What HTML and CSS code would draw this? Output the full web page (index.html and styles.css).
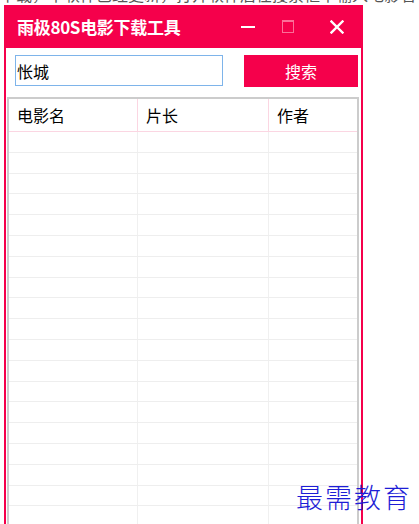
FILE: index.html
```html
<!DOCTYPE html>
<html lang="zh-CN">
<head>
    <meta charset="UTF-8">
    <meta name="viewport" content="width=device-width, initial-scale=1.0">
    <title>雨极80S电影下载工具</title>
    <link rel="stylesheet" href="styles.css">
</head>
<body>

    <!-- the line of the article above, cut off by the screenshot -->
    <div class="cut-line"><span>下载，本软件已经更新，打开软件后在搜索框中输入电影名</span></div>

    <div class="window">
        <div class="title-bar">
            <span class="title">雨极80S电影下载工具</span>
            <div class="controls">
                <span class="ctrl min"></span>
                <span class="ctrl max"></span>
                <svg class="ctrl close" width="14" height="14" viewBox="0 0 14 14">
                    <path d="M1.5 1.5 L12.5 12.5 M12.5 1.5 L1.5 12.5" stroke="#fff" stroke-width="2.4" stroke-linecap="square"/>
                </svg>
            </div>
        </div>

        <div class="search-row">
            <input type="text" class="search-box" value="怅城">
            <button class="search-btn">搜索</button>
        </div>

        <div class="grid">
            <div class="row head">
                <div class="cell">电影名</div>
                <div class="cell">片长</div>
                <div class="cell">作者</div>
            </div>
            <div class="row"><div class="cell"></div><div class="cell"></div><div class="cell"></div></div>
            <div class="row"><div class="cell"></div><div class="cell"></div><div class="cell"></div></div>
            <div class="row"><div class="cell"></div><div class="cell"></div><div class="cell"></div></div>
            <div class="row"><div class="cell"></div><div class="cell"></div><div class="cell"></div></div>
            <div class="row"><div class="cell"></div><div class="cell"></div><div class="cell"></div></div>
            <div class="row"><div class="cell"></div><div class="cell"></div><div class="cell"></div></div>
            <div class="row"><div class="cell"></div><div class="cell"></div><div class="cell"></div></div>
            <div class="row"><div class="cell"></div><div class="cell"></div><div class="cell"></div></div>
            <div class="row"><div class="cell"></div><div class="cell"></div><div class="cell"></div></div>
            <div class="row"><div class="cell"></div><div class="cell"></div><div class="cell"></div></div>
            <div class="row"><div class="cell"></div><div class="cell"></div><div class="cell"></div></div>
            <div class="row"><div class="cell"></div><div class="cell"></div><div class="cell"></div></div>
            <div class="row"><div class="cell"></div><div class="cell"></div><div class="cell"></div></div>
            <div class="row"><div class="cell"></div><div class="cell"></div><div class="cell"></div></div>
            <div class="row"><div class="cell"></div><div class="cell"></div><div class="cell"></div></div>
            <div class="row"><div class="cell"></div><div class="cell"></div><div class="cell"></div></div>
            <div class="row"><div class="cell"></div><div class="cell"></div><div class="cell"></div></div>
            <div class="row"><div class="cell"></div><div class="cell"></div><div class="cell"></div></div>
            <div class="row"><div class="cell"></div><div class="cell"></div><div class="cell"></div></div>
        </div>
    </div>

    <div class="watermark">最需教育</div>

</body>
</html>
```

FILE: styles.css
```css
body {
    margin: 0;
    width: 419px;
    height: 524px;
    overflow: hidden;
    background-color: #fff;
    font-family: "Noto Sans CJK SC", "Noto Sans", sans-serif;
    position: relative;
}

.cut-line {
    height: 5px;
    overflow: hidden;
    font-size: 16px;
    color: #555;
    white-space: nowrap;
}

.cut-line span {
    display: block;
    margin-top: -16px;
    line-height: 20px;
}

.window {
    width: 355px;
    margin-left: 4px;
    border-left: 2px solid #f5004b;
    border-right: 2px solid #f5004b;
    background-color: #fff;
    height: 540px;
}

.title-bar {
    height: 43px;
    margin: 0 -2px;
    background-color: #f5004b; /* bright pink-red title */
    display: flex;
    align-items: center;
    padding-left: 13px;
}

.title {
    color: #fff;
    font-size: 17px;
    font-weight: bold;
    letter-spacing: -0.3px;
    flex: 1;
}

.controls {
    display: flex;
    align-items: center;
    height: 100%;
}

.ctrl {
    display: block;
}

.min {
    width: 14px;
    height: 2px;
    background-color: #fff;
    margin-right: 27px;
    margin-top: 1px;
}

.max {
    width: 10px;
    height: 10px;
    border: 1px solid #fb6f98; /* disabled, faded */
    border-top-width: 2px;
    margin-right: 36px;
}

.close {
    margin-right: 19px;
}

.search-row {
    display: flex;
    align-items: flex-start;
    padding: 7px 0 0 9px;
}

.search-box {
    box-sizing: border-box;
    width: 208px;
    height: 31px;
    margin: 0;
    border: 1px solid #7eb4ea;
    padding: 0 0 0 1px;
    font-family: "Noto Sans CJK SC", sans-serif;
    font-size: 16px;
    color: #000;
    outline: none;
}

.search-btn {
    width: 114px;
    height: 32px;
    margin-left: 21px;
    border: none;
    background-color: #f5004b;
    color: #fff;
    font-family: "Noto Sans CJK SC", sans-serif;
    font-size: 16px;
    padding: 0;
}

.grid {
    margin: 10px 0 0 1px;
    width: 348px;
    border: 2px solid #cccccc;
    border-bottom: none;
}

.row {
    display: grid;
    grid-template-columns: 129px 131px 1fr;
    height: 20.8px;
    border-bottom: 1px solid #eeeeee;
    box-sizing: border-box;
}

.row .cell {
    border-right: 1px solid #f0f0f0;
}

.row .cell:last-child {
    border-right: none;
}

.head {
    height: 33px;
    border-bottom: 1px solid #fbd6e2;
}

.head .cell {
    border-right-color: #fbd6e2;
    font-size: 16px;
    color: #000;
    padding-left: 8px;
    line-height: 32px;
}

.watermark {
    position: absolute;
    left: 296px;
    top: 477px;
    font-size: 27px;
    font-weight: 300;
    color: #1d1dd6;
    letter-spacing: 2px;
    line-height: 40px;
}
```
